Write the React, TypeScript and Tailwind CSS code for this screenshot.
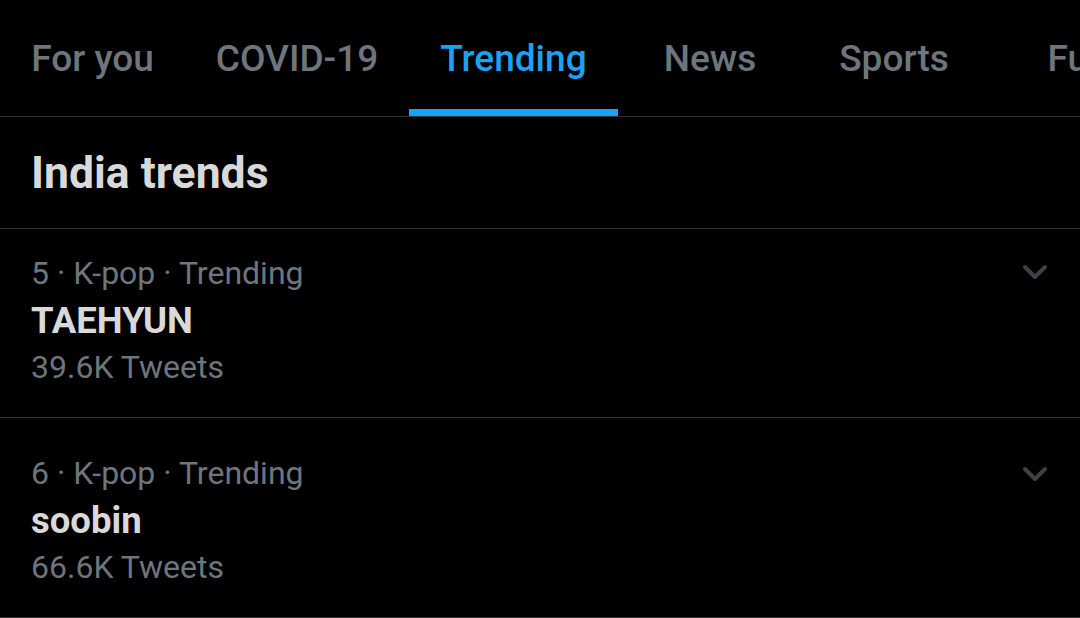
import React from "react";

const tabs: { t: string; w: string }[] = [
  { t: "For you", w: "w-[185px]" },
  { t: "COVID-19", w: "w-[224px]" },
  { t: "Trending", w: "w-[209px]" },
  { t: "News", w: "w-[184px]" },
  { t: "Sports", w: "w-[184px]" },
  { t: "Fun", w: "w-[184px]" },
];

function Chevron() {
  return (
    <svg width="28" height="18" viewBox="0 0 28 18" className="shrink-0">
      <path d="M4 3 L14 13 L24 3" fill="none" stroke="#3e4246" strokeWidth="4" strokeLinecap="round" strokeLinejoin="round" />
    </svg>
  );
}

function Trend({ meta, name, count, pt, chevMt }: { meta: string; name: string; count: string; pt: string; chevMt: string }) {
  return (
    <div className={`flex items-start justify-between border-b border-[#2f3336] pl-[31px] pr-[31px] ${pt} pb-[28px]`}>
      <div className="flex flex-col">
        <div className="text-[32px] leading-[48px] text-[#6e767d]">{meta}</div>
        <div className="text-[36.5px] leading-[48px] font-bold text-[#d9d9d9]">{name}</div>
        <div className="text-[32px] leading-[44px] text-[#6e767d]">{count}</div>
      </div>
      <div className={chevMt}>
        <Chevron />
      </div>
    </div>
  );
}

export default function App() {
  return (
    <div className="w-[1080px] h-[618px] overflow-hidden bg-black" style={{ fontFamily: "Roboto, 'Noto Sans', sans-serif" }}>
      <div className="flex h-[117px] border-b border-[#2f3336] overflow-hidden">
        {tabs.map(({ t, w }) => {
          const active = t === "Trending";
          return (
            <div key={t} className={`relative shrink-0 ${w} pt-[38px] text-center`}>
              <span className={`text-[37px] leading-[42px] font-medium whitespace-nowrap ${active ? "text-[#1da1f2]" : "text-[#6e767d]"}`}>{t}</span>
              {active && <div className="absolute left-0 right-0 bottom-0 h-[7px] bg-[#1da1f2]" />}
            </div>
          );
        })}
      </div>
      <div className="h-[112px] border-b border-[#2f3336] pl-[31px] pt-[30px]">
        <div className="text-[44.5px] leading-[52px] font-bold text-[#d9d9d9]">India trends</div>
      </div>
      <Trend meta="5 · K-pop · Trending" name="TAEHYUN" count="39.6K Tweets" pt="pt-[20px]" chevMt="mt-[15px]" />
      <Trend meta="6 · K-pop · Trending" name="soobin" count="66.6K Tweets" pt="pt-[31px]" chevMt="mt-[17px]" />
    </div>
  );
}
